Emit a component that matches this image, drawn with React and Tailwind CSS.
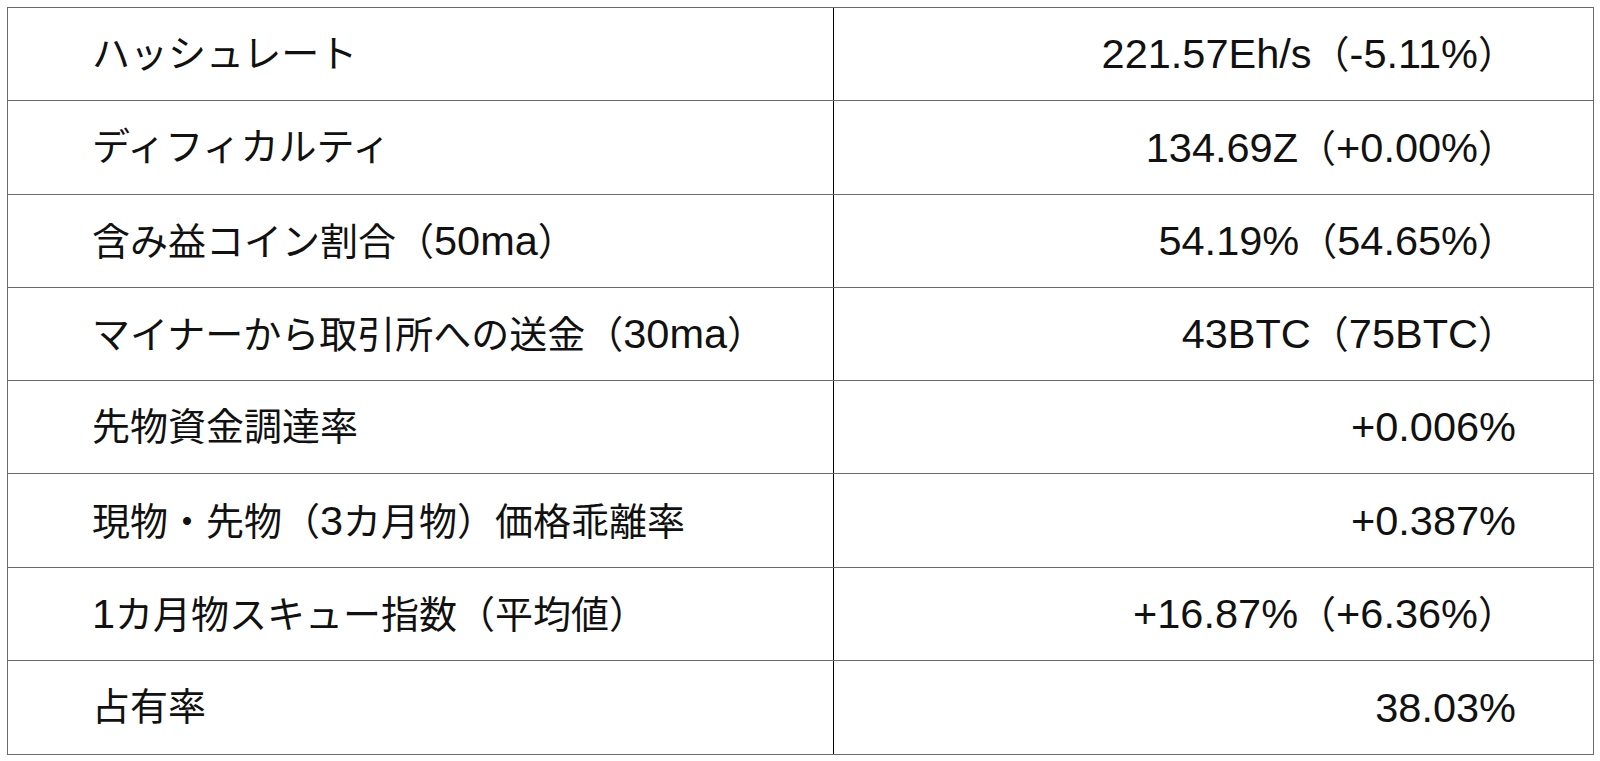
const ROWS = [
  ['ハッシュレート', '221.57Eh/s（-5.11%）'],
  ['ディフィカルティ', '134.69Z（+0.00%）'],
  ['含み益コイン割合（50ma）', '54.19%（54.65%）'],
  ['マイナーから取引所への送金（30ma）', '43BTC（75BTC）'],
  ['先物資金調達率', '+0.006%'],
  ['現物・先物（3カ月物）価格乖離率', '+0.387%'],
  ['1カ月物スキュー指数（平均値）', '+16.87%（+6.36%）'],
  ['占有率', '38.03%'],
];

// latin runs are set a little larger than the Japanese ones, as in the source doc
function Mixed({ text }) {
  const parts = text.match(/[\x20-\x7e]+|[^\x20-\x7e]+/g) || [];
  return parts.map((part, i) =>
    /^[\x20-\x7e]+$/.test(part) ? (
      <span key={i} className="text-[41.5px]">
        {part}
      </span>
    ) : (
      <span key={i}>{part}</span>
    )
  );
}

export default function App() {
  return (
    <main
      className="min-h-screen bg-white p-[7px] text-[#111]"
      style={{ fontFamily: '"Liberation Sans", "Noto Sans CJK JP", sans-serif' }}
    >
      <div className="w-[1587px] border border-[#6b6b6b]">
        {ROWS.map(([label, value], i) => (
          <div
            key={label}
            className={
              'grid h-[93.25px] grid-cols-[825px_1fr] ' +
              (i < ROWS.length - 1 ? 'border-b border-[#6b6b6b]' : '')
            }
          >
            <div className="flex items-baseline self-center pl-[84px] text-[38px] leading-none">
              <Mixed text={label} />
            </div>
            <div className="flex items-center justify-end border-l border-black pr-[77px] text-[38px] leading-none">
              <div>
                <Mixed text={value} />
              </div>
            </div>
          </div>
        ))}
      </div>
    </main>
  );
}
